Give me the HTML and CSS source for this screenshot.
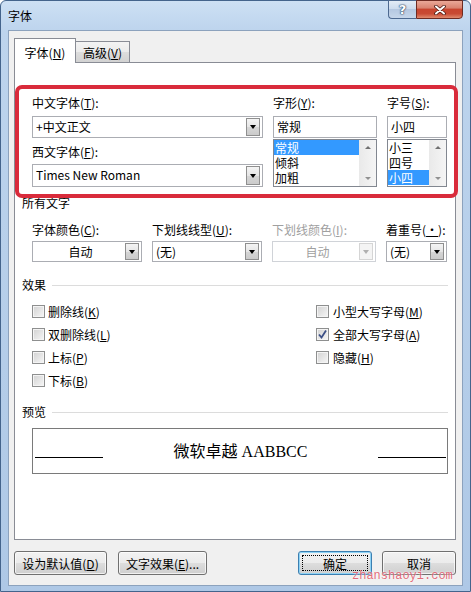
FILE: index.html
```html
<!DOCTYPE html>
<html lang="zh-CN">
  <head>
    <meta charset="UTF-8" />
    <title>字体</title>
    <link rel="stylesheet" href="styles.css">
  </head>
  <body>
    <div class="window">
      <div class="titlebar">
        <span class="title">字体</span>
        <div class="caption-buttons">
          <span class="cap-btn help">?</span>
          <span class="cap-btn close">
            <svg width="12" height="10" viewBox="0 0 12 10">
              <path d="M2 1.5 L10 8.5 M10 1.5 L2 8.5" stroke="#4a1a14" stroke-width="3.6" stroke-linecap="round" />
              <path d="M2 1.5 L10 8.5 M10 1.5 L2 8.5" stroke="#fff" stroke-width="2" stroke-linecap="round" />
            </svg>
          </span>
        </div>
      </div>

      <div class="client">
        <div class="tabs">
          <span class="tab active">字体(<u>N</u>)</span>
          <span class="tab">高级(<u>V</u>)</span>
        </div>

        <div class="panel">
          <!-- font name / style / size -->
          <div class="font-row">
            <div class="col col-name">
              <label>中文字体(<u>T</u>):</label>
              <div class="combo"><span class="combo-text">+中文正文</span><span class="arrow"></span></div>
              <label class="second">西文字体(<u>F</u>):</label>
              <div class="combo tall"><span class="combo-text">Times New Roman</span><span class="arrow"></span></div>
            </div>
            <div class="col col-style">
              <label>字形(<u>Y</u>):</label>
              <div class="textbox">常规</div>
              <div class="listbox">
                <ul>
                  <li class="sel">常规</li>
                  <li>倾斜</li>
                  <li>加粗</li>
                </ul>
                <div class="scrollbar"><span class="up"></span><span class="down"></span></div>
              </div>
            </div>
            <div class="col col-size">
              <label>字号(<u>S</u>):</label>
              <div class="textbox">小四</div>
              <div class="listbox">
                <ul>
                  <li>小三</li>
                  <li>四号</li>
                  <li class="sel">小四</li>
                </ul>
                <div class="scrollbar"><span class="up"></span><span class="down"></span></div>
              </div>
            </div>
          </div>

          <div class="section-title no-line all-text">所有文字</div>
          <div class="attr-row">
            <div class="attr w110">
              <label>字体颜色(<u>C</u>):</label>
              <div class="combo short"><span class="combo-text center">自动</span><span class="arrow"></span></div>
            </div>
            <div class="attr w110">
              <label>下划线线型(<u>U</u>):</label>
              <div class="combo short"><span class="combo-text">(无)</span><span class="arrow"></span></div>
            </div>
            <div class="attr w104 disabled">
              <label>下划线颜色(<u>I</u>):</label>
              <div class="combo short"><span class="combo-text center">自动</span><span class="arrow"></span></div>
            </div>
            <div class="attr w61">
              <label>着重号(<u>·</u>):</label>
              <div class="combo short"><span class="combo-text">(无)</span><span class="arrow"></span></div>
            </div>
          </div>

          <div class="section-title effects-title">效果</div>
          <div class="effects">
            <div class="effects-col first">
              <div class="check"><span class="box"></span>删除线(<u>K</u>)</div>
              <div class="check"><span class="box"></span>双删除线(<u>L</u>)</div>
              <div class="check"><span class="box"></span>上标(<u>P</u>)</div>
              <div class="check"><span class="box"></span>下标(<u>B</u>)</div>
            </div>
            <div class="effects-col">
              <div class="check"><span class="box"></span>小型大写字母(<u>M</u>)</div>
              <div class="check">
                <span class="box">
                  <svg width="11" height="11" viewBox="0 0 11 11">
                    <path d="M2 5.5 L4.5 8.5 L9 1.5" fill="none" stroke="#3b4f86" stroke-width="1.8" />
                  </svg>
                </span>全部大写字母(<u>A</u>)
              </div>
              <div class="check"><span class="box"></span>隐藏(<u>H</u>)</div>
            </div>
          </div>

          <div class="section-title preview-title">预览</div>
          <div class="preview">
            <span class="preview-line left"></span>
            <span class="preview-text">微软卓越 AABBCC</span>
            <span class="preview-line right"></span>
          </div>
        </div>

        <div class="buttons">
          <button class="btn w93">设为默认值(<u>D</u>)</button>
          <button class="btn w89">文字效果(<u>E</u>)...</button>
          <button class="btn w74 default">确定</button>
          <button class="btn w74">取消</button>
        </div>
      </div>

      <div class="highlight"></div>
      <div class="watermark">zhanshaoyi.com</div>
    </div>
  </body>
</html>
```

FILE: styles.css
```css
* {
  box-sizing: border-box;
  margin: 0;
  padding: 0;
}

body {
  width: 471px;
  height: 592px;
  overflow: hidden;
  font-family: "Noto Sans CJK SC", "Noto Sans", sans-serif;
  font-size: 12px;
  color: #000;
  background: #fff;
}

u {
  text-decoration: underline;
  text-underline-offset: 1px;
}

/* window frame */
.window {
  position: relative;
  width: 471px;
  height: 592px;
  display: flex;
  flex-direction: column;
  padding: 0 7px 5px 7px;
  border: 1px solid #44648c;
  border-radius: 6px 6px 0 0;
  background: linear-gradient(180deg, #cde0f4 0%, #bdd4ed 30px, #aec8e6 100%);
}

.titlebar {
  height: 29px;
  display: flex;
  align-items: center;
}

.title {
  font-size: 12px;
  color: #000;
}

.caption-buttons {
  display: flex;
  align-self: flex-start;
  margin-left: auto;
  margin-top: -1px;
}

.cap-btn {
  height: 19px;
  display: flex;
  align-items: center;
  justify-content: center;
  border: 1px solid #4d6990;
}

.help {
  width: 28px;
  border-right: none;
  border-radius: 0 0 0 4px;
  background: linear-gradient(180deg, #e3ecf6 0%, #cddcee 45%, #b5c8e1 50%, #c6d6ea 100%);
  color: #fff;
  font-family: "DejaVu Sans", sans-serif;
  font-weight: bold;
  font-size: 13px;
  text-shadow: 0 0 1px #2c4565, 0 0 1px #2c4565, 0 0 2px #2c4565;
}

.close {
  width: 47px;
  border-color: #6e2b22;
  border-radius: 0 0 4px 0;
  background: linear-gradient(180deg, #eaa898 0%, #d98471 40%, #c8452f 50%, #c84a33 75%, #e08a6e 100%);
}

/* client area */
.client {
  flex: 1;
  display: flex;
  flex-direction: column;
  padding: 7px 6px 0 5px;
  background: #f0f0f0;
  border: 1px solid #8ca2bd;
}

.tabs {
  display: flex;
  align-items: flex-end;
  height: 24px;
}

.tab {
  display: flex;
  align-items: center;
  justify-content: center;
  border: 1px solid #898c95;
}

.tab.active {
  position: relative;
  z-index: 1;
  width: 62px;
  height: 25px;
  margin-bottom: -1px;
  padding-top: 2px;
  border-bottom: none;
  background: #fff;
}

.tab:not(.active) {
  width: 54px;
  height: 21px;
  border-left: none;
  border-bottom: none;
  background: linear-gradient(180deg, #f3f3f3 0%, #ebebeb 50%, #dddddd 51%, #d2d2d2 100%);
}

.panel {
  height: 478px;
  padding: 0 7px;
  background: #fff;
  border: 1px solid #898c95;
}

label {
  display: block;
  height: 14px;
  line-height: 14px;
  white-space: nowrap;
}

/* font row */
.font-row {
  display: flex;
  gap: 10px;
  padding: 33px 0 0 10px;
}

.col-name {
  width: 231px;
}

.col-style {
  width: 104px;
}

.col-size {
  width: 60px;
}

.col label {
  margin-bottom: 6px;
}

.col label.second {
  margin-top: 7px;
  margin-bottom: 5px;
}

.combo {
  display: flex;
  height: 22px;
  background: #fff;
  border: 1px solid #abadb3;
}

.combo.tall {
  height: 23px;
}

.combo.short {
  height: 21px;
}

.combo-text {
  flex: 1;
  padding-left: 3px;
  line-height: 19px;
  white-space: nowrap;
  overflow: hidden;
}

.combo-text.center {
  text-align: center;
}

.arrow {
  width: 14px;
  margin: 1px 2px 1px 0;
  display: flex;
  align-items: center;
  justify-content: center;
  border: 1px solid #8f8f8f;
  background: linear-gradient(180deg, #f4f4f4 0%, #e6e6e6 50%, #d6d6d6 51%, #cbcbcb 100%);
}

.arrow::after {
  content: "";
  border-top: 4px solid #000;
  border-left: 3.5px solid transparent;
  border-right: 3.5px solid transparent;
}

.textbox {
  height: 22px;
  padding-left: 3px;
  line-height: 20px;
  border: 1px solid #abadb3;
}

.listbox {
  display: flex;
  height: 48px;
  margin-top: 1px;
  border: 1px solid #828790;
}

.listbox ul {
  flex: 1;
  list-style: none;
}

.listbox li {
  height: 15px;
  line-height: 15px;
  padding-left: 1px;
}

.listbox li.sel {
  background: #3399ff;
  color: #fff;
}

.scrollbar {
  width: 17px;
  display: flex;
  flex-direction: column;
  justify-content: space-between;
  align-items: center;
  padding: 6px 0;
  background: linear-gradient(90deg, #e9e9e9 0%, #f5f5f5 100%);
}

.scrollbar .up {
  border-bottom: 3px solid #707070;
  border-left: 3px solid transparent;
  border-right: 3px solid transparent;
}

.scrollbar .down {
  border-top: 3px solid #909090;
  border-left: 3px solid transparent;
  border-right: 3px solid transparent;
}

/* section headings */
.section-title {
  display: flex;
  align-items: center;
  height: 14px;
  line-height: 14px;
}

.section-title::after {
  content: "";
  flex: 1;
  height: 1px;
  margin-left: 6px;
  background: #dcdcdc;
}

.section-title.no-line::after {
  display: none;
}

.all-text {
  margin-top: 9px;
}

.effects-title {
  margin-top: 16px;
}

.preview-title {
  margin-top: 13px;
}

/* attribute combos */
.attr-row {
  display: flex;
  gap: 10px;
  margin-top: 13px;
  padding-left: 10px;
}

.attr label {
  margin-bottom: 4px;
}

.w110 {
  width: 110px;
}

.w104 {
  width: 104px;
}

.w61 {
  width: 61px;
}

.disabled label,
.disabled .combo-text {
  color: #a0a0a0;
}

.disabled .combo {
  border-color: #d0d3d8;
}

.disabled .arrow {
  border-color: #d5d5d5;
  background: #f4f4f4;
}

.disabled .arrow::after {
  border-top-color: #b0b0b0;
}

/* effects */
.effects {
  display: flex;
  margin-top: 8px;
  padding-left: 10px;
}

.effects-col.first {
  width: 284px;
}

.check {
  display: flex;
  align-items: center;
  height: 23px;
  white-space: nowrap;
}

.check .box {
  width: 13px;
  height: 13px;
  margin-right: 3px;
  display: flex;
  align-items: center;
  justify-content: center;
  border: 1px solid #8e8f8f;
  background: linear-gradient(135deg, #d2d2d2 0%, #f6f6f6 100%);
  box-shadow: inset 0 0 0 1px #f4f4f4;
}

.effects-col:not(.first) .box {
  margin-right: 4px;
}

/* preview */
.preview {
  display: flex;
  align-items: flex-start;
  height: 46px;
  margin: 9px 0 0 10px;
  border: 1px solid #7a7a7a;
}

.preview-line {
  width: 68px;
  height: 1px;
  margin-top: 28px;
  background: #000;
}

.preview-line.left {
  margin-left: 2px;
}

.preview-line.right {
  margin-right: 1px;
}

.preview-text {
  flex: 1;
  margin-top: 13px;
  line-height: 20px;
  text-align: center;
  font-family: "Liberation Serif", "Noto Sans CJK SC", serif;
  font-size: 16px;
}

/* bottom buttons */
.buttons {
  display: flex;
  gap: 11px;
  margin-top: 11px;
  height: 24px;
}

.btn {
  position: relative;
  height: 24px;
  font-family: inherit;
  font-size: 12px;
  color: #000;
  border: 1px solid #707070;
  border-radius: 3px;
  background: linear-gradient(180deg, #f2f2f2 0%, #ebebeb 50%, #dddddd 51%, #cfcfcf 100%);
  box-shadow: inset 0 0 0 1px rgba(255, 255, 255, 0.7);
}

.w93 {
  width: 93px;
}

.w89 {
  width: 89px;
}

.w74 {
  width: 74px;
}

.btn.default {
  margin-left: auto;
  margin-right: -1px;
  border-color: #3c7fb1;
  box-shadow: inset 0 0 0 1px #8fd3f5;
}

.btn.default::after {
  content: "";
  position: absolute;
  top: 3px;
  left: 3px;
  right: 3px;
  bottom: 3px;
  border: 1px dotted #000;
}

/* annotation overlays */
.highlight {
  position: absolute;
  left: 14px;
  top: 84px;
  width: 443px;
  height: 113px;
  border: 4px solid #d92b3b;
  border-radius: 7px;
  pointer-events: none;
}

.watermark {
  position: absolute;
  left: 351px;
  top: 568px;
  font-family: "Liberation Mono", monospace;
  font-size: 12px;
  line-height: 14px;
  color: rgba(222, 70, 90, 0.8);
  text-shadow: 0 0 2px #fff;
}
```
